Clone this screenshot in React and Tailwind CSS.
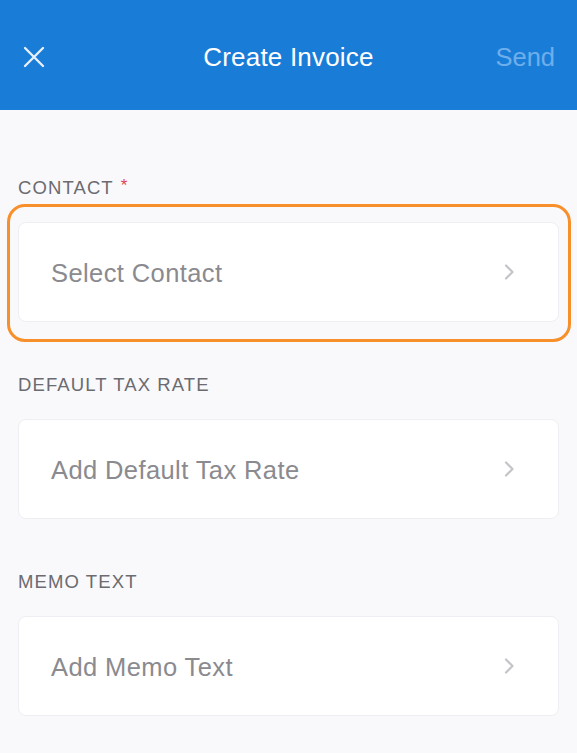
import React from 'react';

function Chevron() {
  return (
    <svg width="12" height="18" viewBox="0 0 12 18" fill="none" className="shrink-0">
      <path d="M3 2.5 L9.5 9 L3 15.5" stroke="#c3c3c8" strokeWidth="2.2" strokeLinecap="round" strokeLinejoin="round" />
    </svg>
  );
}

function Field({ label, required, placeholder, highlighted }) {
  return (
    <div className="flex flex-col">
      <div className="h-5 flex items-center text-[18.5px] tracking-[1.1px] text-[#6b6b70] uppercase">
        {label}
        {required && <span className="ml-[7px] text-[#e0454f] text-[17px] -mt-[4px]">*</span>}
      </div>
      <div className="relative mt-6">
        {highlighted && (
          <div className="absolute -left-[11px] -right-[12px] -top-[18px] -bottom-[20px] border-[3px] border-[#f7902a] rounded-[18px] pointer-events-none" />
        )}
        <div className="h-[100px] bg-white border border-[#efeff3] rounded-lg flex items-center justify-between pl-8 pr-[43px]">
          <span className="text-[25.5px] tracking-[0.4px] text-[#8a8a8f] pt-[3px]">{placeholder}</span>
          <Chevron />
        </div>
      </div>
    </div>
  );
}

export default function App() {
  return (
    <div className="w-[577px] h-[753px] bg-[#f9f9fc] overflow-hidden" style={{ fontFamily: '"Liberation Sans", Arial, sans-serif' }}>
      <div className="h-[110px] bg-[#197dd8] grid grid-cols-[1fr_auto_1fr] items-center px-[22px] pt-[4px]">
        <svg width="24" height="24" viewBox="0 0 24 24" fill="none">
          <path d="M3 3 L21 21 M21 3 L3 21" stroke="#e8f1fb" strokeWidth="2.3" strokeLinecap="round" />
        </svg>
        <div className="text-[26px] text-white tracking-[0.2px]">Create Invoice</div>
        <div className="text-[25.5px] text-[#6eaeeb] justify-self-end">Send</div>
      </div>
      <div className="px-[18px] pt-[68px] flex flex-col gap-[53px]">
        <Field label="Contact" required placeholder="Select Contact" highlighted />
        <Field label="Default Tax Rate" placeholder="Add Default Tax Rate" />
        <Field label="Memo Text" placeholder="Add Memo Text" />
      </div>
    </div>
  );
}
